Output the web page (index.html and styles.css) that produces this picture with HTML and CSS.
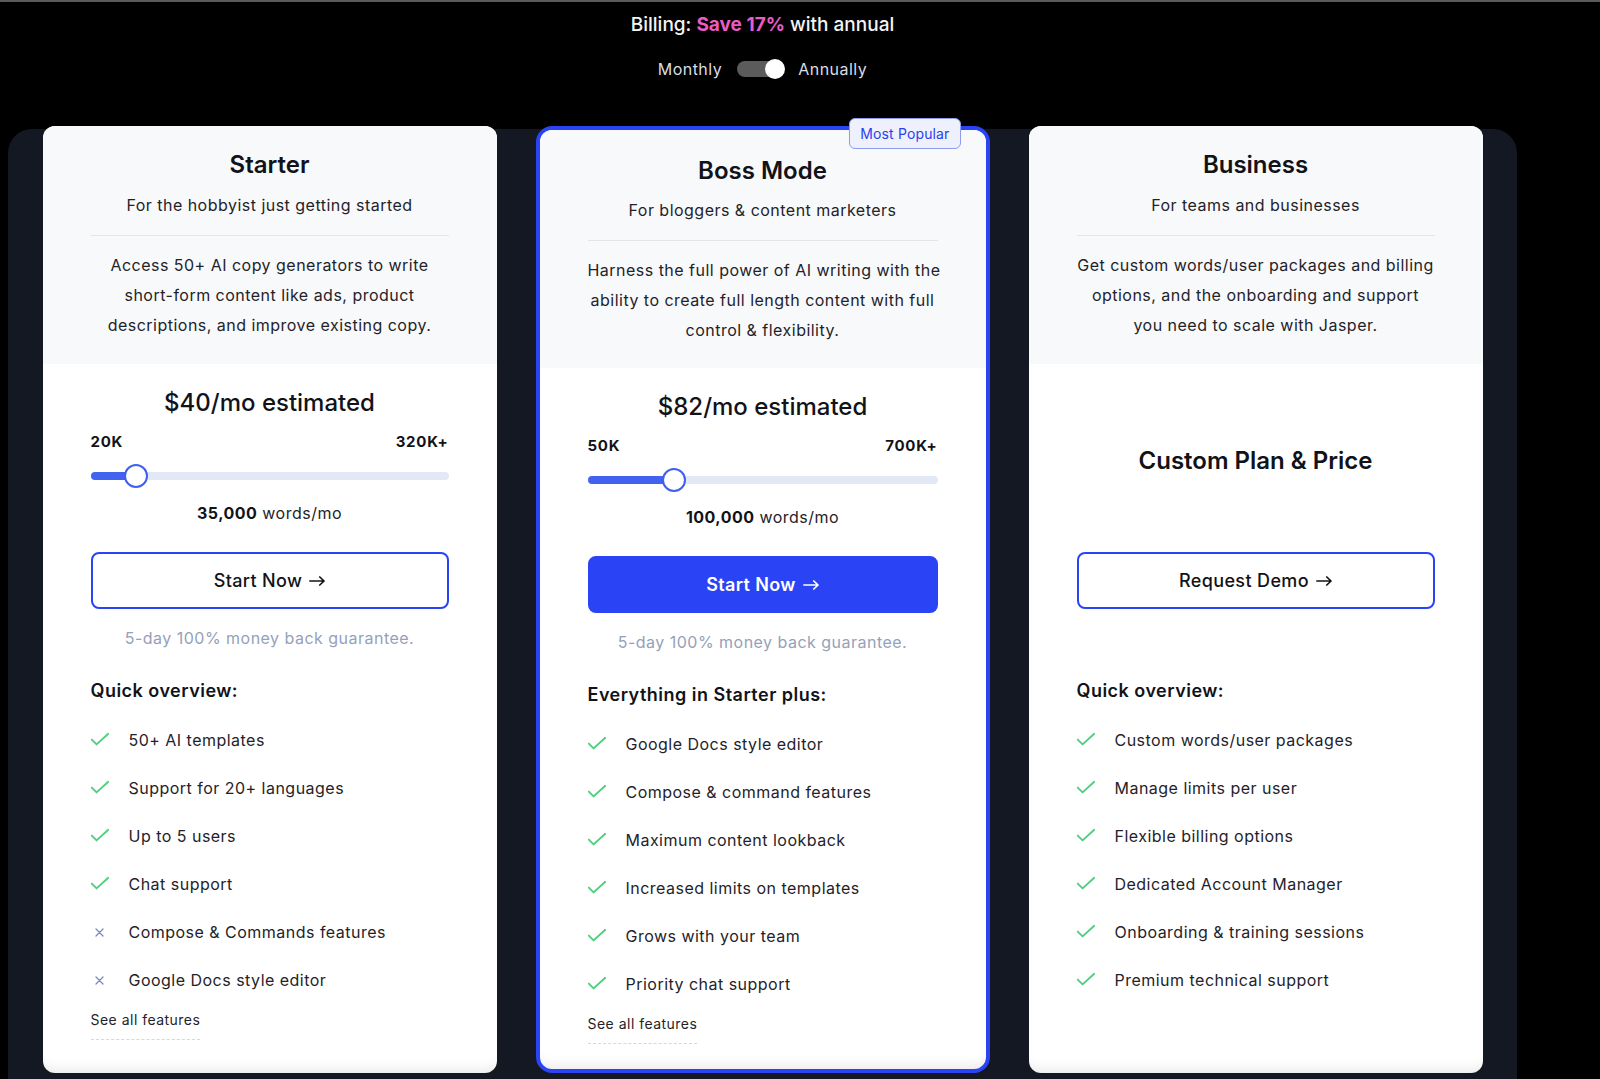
FILE: index.html
```html
<!DOCTYPE html>
<html lang="en">
<head>
<meta charset="utf-8">
<title>Pricing</title>
<link rel="stylesheet" href="styles.css">
</head>
<body>
<div class="page">
  <header class="billing">
    <p class="billing-title">Billing: <span class="save">Save 17%</span> with annual</p>
    <div class="billing-toggle">
      <span>Monthly</span>
      <span class="switch"><span class="switch-knob"></span></span>
      <span>Annually</span>
    </div>
  </header>

  <section class="panel">
    <div class="plans">
      <!-- Starter -->
      <article class="plan">
        <div class="plan-head">
          <h2 class="plan-name">Starter</h2>
          <p class="plan-tagline">For the hobbyist just getting started</p>
          <hr class="plan-rule">
          <p class="plan-desc">Access 50+ AI copy generators to write<br>short-form content like ads, product<br>descriptions, and improve existing copy.</p>
        </div>
        <div class="plan-body">
          <div class="estimate">
            <p class="price">$40/mo estimated</p>
            <div class="range-labels"><span>20K</span><span>320K+</span></div>
            <div class="slider">
              <div class="slider-track"><div class="slider-fill" style="width:12.6%"></div></div>
              <span class="slider-thumb" style="left:12.6%"></span>
            </div>
            <p class="words"><b>35,000</b> words/mo</p>
          </div>
          <a class="btn btn-outline" href="#">Start Now<svg class="arrow" width="16" height="10" viewBox="0 0 16 10"><path d="M0.8 5H15M10.8 1L15 5L10.8 9"/></svg></a>
          <p class="guarantee">5-day 100% money back guarantee.</p>
          <h3 class="features-title">Quick overview:</h3>
          <ul class="features">
            <li class="feature"><span class="feature-icon"><svg class="icon-check" width="18" height="14" viewBox="0 0 18 14"><path d="M0.8 6.6L5.6 11.4L17.2 0.8"/></svg></span>50+ AI templates</li>
            <li class="feature"><span class="feature-icon"><svg class="icon-check" width="18" height="14" viewBox="0 0 18 14"><path d="M0.8 6.6L5.6 11.4L17.2 0.8"/></svg></span>Support for 20+ languages</li>
            <li class="feature"><span class="feature-icon"><svg class="icon-check" width="18" height="14" viewBox="0 0 18 14"><path d="M0.8 6.6L5.6 11.4L17.2 0.8"/></svg></span>Up to 5 users</li>
            <li class="feature"><span class="feature-icon"><svg class="icon-check" width="18" height="14" viewBox="0 0 18 14"><path d="M0.8 6.6L5.6 11.4L17.2 0.8"/></svg></span>Chat support</li>
            <li class="feature"><span class="feature-icon"><svg class="icon-x" width="9" height="9" viewBox="0 0 9 9"><path d="M1 1L8 8M8 1L1 8"/></svg></span>Compose &amp; Commands features</li>
            <li class="feature"><span class="feature-icon"><svg class="icon-x" width="9" height="9" viewBox="0 0 9 9"><path d="M1 1L8 8M8 1L1 8"/></svg></span>Google Docs style editor</li>
          </ul>
          <a class="see-all" href="#">See all features</a>
        </div>
      </article>

      <!-- Boss Mode -->
      <article class="plan plan-featured">
        <span class="badge">Most Popular</span>
        <div class="plan-head">
          <h2 class="plan-name">Boss Mode</h2>
          <p class="plan-tagline">For bloggers &amp; content marketers</p>
          <hr class="plan-rule">
          <p class="plan-desc">Harness the full power of AI writing with the<br>ability to create full length content with full<br>control &amp; flexibility.</p>
        </div>
        <div class="plan-body">
          <div class="estimate">
            <p class="price">$82/mo estimated</p>
            <div class="range-labels"><span>50K</span><span>700K+</span></div>
            <div class="slider">
              <div class="slider-track"><div class="slider-fill" style="width:24.7%"></div></div>
              <span class="slider-thumb" style="left:24.7%"></span>
            </div>
            <p class="words"><b>100,000</b> words/mo</p>
          </div>
          <a class="btn btn-primary" href="#">Start Now<svg class="arrow" width="16" height="10" viewBox="0 0 16 10"><path d="M0.8 5H15M10.8 1L15 5L10.8 9"/></svg></a>
          <p class="guarantee">5-day 100% money back guarantee.</p>
          <h3 class="features-title">Everything in Starter plus:</h3>
          <ul class="features">
            <li class="feature"><span class="feature-icon"><svg class="icon-check" width="18" height="14" viewBox="0 0 18 14"><path d="M0.8 6.6L5.6 11.4L17.2 0.8"/></svg></span>Google Docs style editor</li>
            <li class="feature"><span class="feature-icon"><svg class="icon-check" width="18" height="14" viewBox="0 0 18 14"><path d="M0.8 6.6L5.6 11.4L17.2 0.8"/></svg></span>Compose &amp; command features</li>
            <li class="feature"><span class="feature-icon"><svg class="icon-check" width="18" height="14" viewBox="0 0 18 14"><path d="M0.8 6.6L5.6 11.4L17.2 0.8"/></svg></span>Maximum content lookback</li>
            <li class="feature"><span class="feature-icon"><svg class="icon-check" width="18" height="14" viewBox="0 0 18 14"><path d="M0.8 6.6L5.6 11.4L17.2 0.8"/></svg></span>Increased limits on templates</li>
            <li class="feature"><span class="feature-icon"><svg class="icon-check" width="18" height="14" viewBox="0 0 18 14"><path d="M0.8 6.6L5.6 11.4L17.2 0.8"/></svg></span>Grows with your team</li>
            <li class="feature"><span class="feature-icon"><svg class="icon-check" width="18" height="14" viewBox="0 0 18 14"><path d="M0.8 6.6L5.6 11.4L17.2 0.8"/></svg></span>Priority chat support</li>
          </ul>
          <a class="see-all" href="#">See all features</a>
        </div>
      </article>

      <!-- Business -->
      <article class="plan">
        <div class="plan-head">
          <h2 class="plan-name">Business</h2>
          <p class="plan-tagline">For teams and businesses</p>
          <hr class="plan-rule">
          <p class="plan-desc">Get custom words/user packages and billing<br>options, and the onboarding and support<br>you need to scale with Jasper.</p>
        </div>
        <div class="plan-body plan-body-custom">
          <div class="custom-price">Custom Plan &amp; Price</div>
          <a class="btn btn-outline" href="#">Request Demo<svg class="arrow" width="16" height="10" viewBox="0 0 16 10"><path d="M0.8 5H15M10.8 1L15 5L10.8 9"/></svg></a>
          <p class="guarantee"></p>
          <h3 class="features-title">Quick overview:</h3>
          <ul class="features">
            <li class="feature"><span class="feature-icon"><svg class="icon-check" width="18" height="14" viewBox="0 0 18 14"><path d="M0.8 6.6L5.6 11.4L17.2 0.8"/></svg></span>Custom words/user packages</li>
            <li class="feature"><span class="feature-icon"><svg class="icon-check" width="18" height="14" viewBox="0 0 18 14"><path d="M0.8 6.6L5.6 11.4L17.2 0.8"/></svg></span>Manage limits per user</li>
            <li class="feature"><span class="feature-icon"><svg class="icon-check" width="18" height="14" viewBox="0 0 18 14"><path d="M0.8 6.6L5.6 11.4L17.2 0.8"/></svg></span>Flexible billing options</li>
            <li class="feature"><span class="feature-icon"><svg class="icon-check" width="18" height="14" viewBox="0 0 18 14"><path d="M0.8 6.6L5.6 11.4L17.2 0.8"/></svg></span>Dedicated Account Manager</li>
            <li class="feature"><span class="feature-icon"><svg class="icon-check" width="18" height="14" viewBox="0 0 18 14"><path d="M0.8 6.6L5.6 11.4L17.2 0.8"/></svg></span>Onboarding &amp; training sessions</li>
            <li class="feature"><span class="feature-icon"><svg class="icon-check" width="18" height="14" viewBox="0 0 18 14"><path d="M0.8 6.6L5.6 11.4L17.2 0.8"/></svg></span>Premium technical support</li>
          </ul>
        </div>
      </article>
    </div>
  </section>
</div>
</body>
</html>
```

FILE: styles.css
```css
* {
  box-sizing: border-box;
}

html,
body {
  margin: 0;
  padding: 0;
}

body {
  width: 1600px;
  height: 1079px;
  overflow: hidden;
  background: #000;
  border-top: 2px solid #5a5a5e;
  font-family: Inter, "Noto Sans", "Liberation Sans", sans-serif;
  letter-spacing: 0.03em;
  color: #111827;
}

.page {
  width: 1509px;
  margin-left: 8px;
}

/* ---------- Billing header ---------- */
.billing {
  text-align: center;
  color: #f3f4f6;
}

.billing-title {
  margin: 0;
  padding-top: 9px;
  font-size: 19px;
  line-height: 28px;
  font-weight: 500;
  letter-spacing: 0;
}

.save {
  color: #ea5cc6;
  font-weight: 700;
}

.billing-toggle {
  margin-top: 18px;
  display: flex;
  justify-content: center;
  align-items: center;
  gap: 15px;
  font-size: 16px;
  line-height: 24px;
  color: #d9dde6;
}

.switch {
  position: relative;
  width: 46px;
  height: 16px;
  border-radius: 8px;
  background: #5b5b5b;
}

.switch-knob {
  position: absolute;
  top: -2px;
  right: -2px;
  width: 20px;
  height: 20px;
  border-radius: 50%;
  background: #fff;
}

/* ---------- Panel & cards ---------- */
.panel {
  margin-top: 48px;
  display: flex;
  flex-direction: column;
  background: #131822;
  border-radius: 24px 24px 0 0;
  padding-bottom: 60px;
}

.plans {
  margin-top: -3px;
  display: grid;
  grid-template-columns: repeat(3, 454px);
  column-gap: 39px;
  justify-content: center;
}

.plan {
  position: relative;
  display: flex;
  flex-direction: column;
  background: #fff;
  border-radius: 12px;
  box-shadow: inset 0 -16px 14px -14px rgba(0, 0, 0, 0.10);
}

.plan-featured {
  border: 4px solid #2a43f5;
  border-radius: 16px;
}

.badge {
  position: absolute;
  top: -12px;
  right: 25px;
  height: 31px;
  padding: 0 10px;
  border: 1px solid #8c9cf3;
  border-radius: 6px;
  background: #eef1fc;
  color: #2a40ee;
  font-size: 14px;
  line-height: 29px;
  letter-spacing: 0.01em;
  z-index: 1;
}

.plan-head {
  background: #f8f9fb;
  border-radius: 12px 12px 0 0;
  padding: 23px 48px 24px;
  text-align: center;
}

.plan-featured .plan-head {
  padding-top: 25px;
  padding-bottom: 23px;
}

.plan-name {
  margin: 0;
  font-size: 24px;
  line-height: 32px;
  font-weight: 600;
  letter-spacing: 0;
  color: #111318;
}

.plan-tagline {
  margin: 12px 0 0;
  font-size: 16px;
  line-height: 24px;
  color: #1f2329;
}

.plan-featured .plan-tagline {
  margin-top: 11px;
}

.plan-rule {
  margin: 18px 0 0;
  border: 0;
  border-top: 1px solid #e3e5e9;
}

.plan-desc {
  margin: 14px 0 0;
  font-size: 16px;
  line-height: 30px;
  color: #1f2329;
  white-space: nowrap;
}

.plan-body {
  flex: 1;
  display: flex;
  flex-direction: column;
  padding: 23px 48px 25px;
}

.plan-body-custom {
  padding-top: 0;
}

/* ---------- Estimate / slider ---------- */
.estimate {
  height: 165px;
  text-align: center;
}

.price {
  margin: 0;
  font-size: 24px;
  line-height: 32px;
  font-weight: 500;
  letter-spacing: 0;
  color: #111318;
}

.range-labels {
  margin-top: 13px;
  display: flex;
  justify-content: space-between;
  font-size: 15px;
  line-height: 20px;
  font-weight: 700;
  letter-spacing: 0.05em;
  color: #111318;
}

.slider {
  position: relative;
  margin-top: 12px;
  padding: 8px 0;
}

.slider-track {
  height: 8px;
  border-radius: 4px;
  background: #e2e8f6;
  overflow: hidden;
}

.slider-fill {
  height: 100%;
  background: #4262f0;
}

.slider-thumb {
  position: absolute;
  top: 0;
  width: 24px;
  height: 24px;
  margin-left: -12px;
  border: 2px solid #3f5ff0;
  border-radius: 50%;
  background: #fff;
}

.words {
  margin: 13px 0 0;
  font-size: 16px;
  line-height: 24px;
  color: #1f2329;
}

.words b {
  font-weight: 700;
  color: #111318;
}

.custom-price {
  height: 188px;
  padding-top: 4px;
  display: flex;
  align-items: center;
  justify-content: center;
  font-size: 24px;
  font-weight: 600;
  letter-spacing: 0;
  color: #111318;
}

/* ---------- Buttons ---------- */
.btn {
  display: flex;
  align-items: center;
  justify-content: center;
  gap: 7px;
  height: 57px;
  border: 2px solid #2a43f5;
  border-radius: 8px;
  font-size: 18px;
  line-height: 24px;
  text-decoration: none;
  font-weight: 500;
  letter-spacing: 0.02em;
  color: #111318;
}

.btn-primary {
  background: #2a43f5;
  color: #fff;
  font-weight: 600;
}

.arrow {
  flex: none;
  margin-top: 1px;
}

.arrow path {
  fill: none;
  stroke: currentColor;
  stroke-width: 1.7;
  stroke-linecap: round;
  stroke-linejoin: round;
}

.guarantee {
  margin: 17px 0 0;
  min-height: 24px;
  text-align: center;
  font-size: 16px;
  line-height: 24px;
  color: #95a1b9;
}

/* ---------- Features ---------- */
.features-title {
  margin: 27px 0 0;
  font-size: 18px;
  line-height: 28px;
  font-weight: 600;
  color: #111318;
}

.features {
  list-style: none;
  margin: 23px 0 0;
  padding: 0;
  display: flex;
  flex-direction: column;
  gap: 24px;
}

.feature {
  display: flex;
  align-items: center;
  gap: 20px;
  font-size: 16px;
  line-height: 24px;
  color: #1f2329;
}

.feature-icon {
  flex: none;
  width: 18px;
  height: 24px;
  display: flex;
  align-items: center;
  justify-content: center;
}

.icon-check path {
  fill: none;
  stroke: #4fcf7f;
  stroke-width: 1.9;
  stroke-linecap: round;
  stroke-linejoin: round;
}

.icon-x path {
  fill: none;
  stroke: #7d86c2;
  stroke-width: 1.3;
  stroke-linecap: round;
}

.see-all {
  align-self: flex-start;
  margin-top: 18px;
  padding-bottom: 9px;
  border-bottom: 1px dashed #d3d7de;
  font-size: 14px;
  line-height: 20px;
  color: #1f2329;
  text-decoration: none;
}
```
